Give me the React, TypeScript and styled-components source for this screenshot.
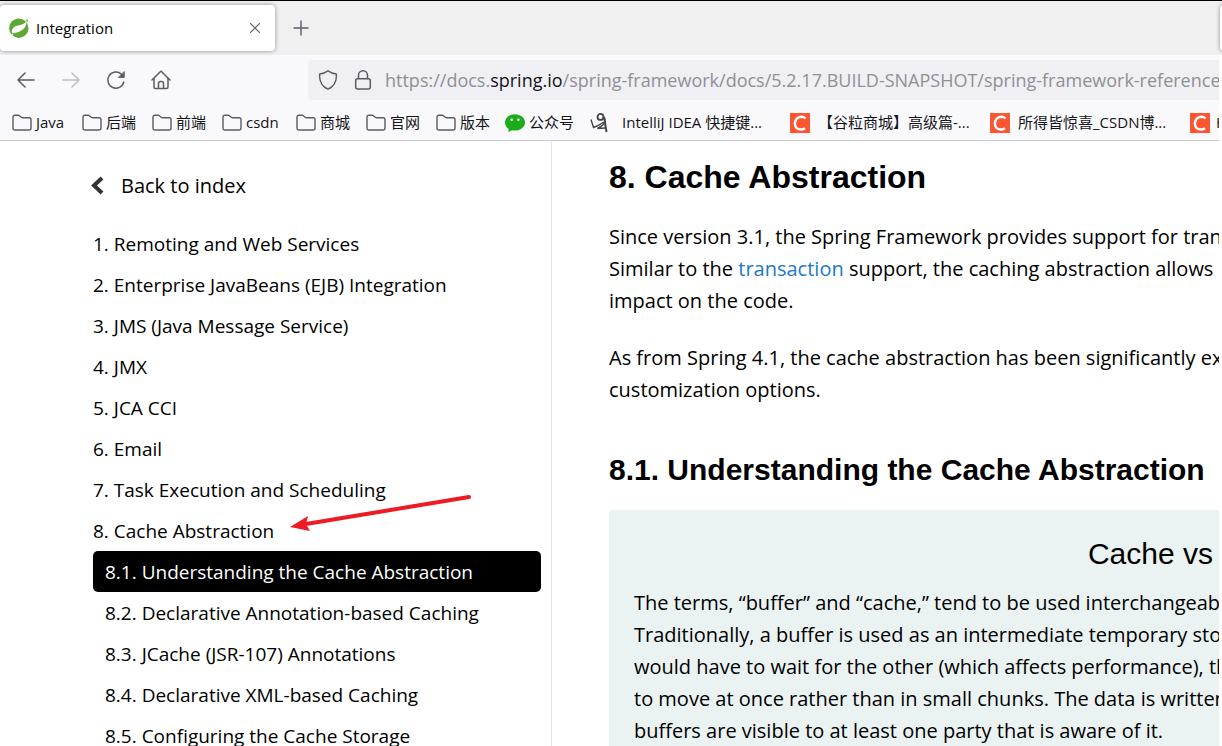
import React from 'react';
import styled, { createGlobalStyle, css } from 'styled-components';

const ui = '"Open Sans", "Noto Sans CJK SC", sans-serif';
const body = '"Open Sans", sans-serif';
const heading = '"Liberation Sans", Arial, sans-serif';

const GlobalStyle = createGlobalStyle`
  * { box-sizing: border-box; }
  body { margin: 0; background: #fff; color: #000; }
  a { color: inherit; text-decoration: none; }
  button { border: 0; padding: 0; background: none; color: inherit; }
  h1, h2, h3, p, ul, ol { margin: 0; padding: 0; font-weight: normal; }
  ul, ol { list-style: none; }
  svg { flex: none; }
`;

const Window = styled.div`
  height: 100vh;
  display: flex;
  flex-direction: column;
  overflow: hidden;
  padding-right: 3px;
  border-top: 1px solid #000;
`;

const TabStrip = styled.header`
  flex: none;
  display: flex;
  align-items: center;
  height: 54px;
  margin-right: -3px;
  background: #f0f0f0;
  overflow: hidden;
`;

const Tab = styled.div`
  display: flex;
  align-items: center;
  width: 275px;
  height: 46px;
  padding: 0 10px 0 9px;
  background: #fff;
  border-radius: 4px;
  box-shadow: 0 0 4px rgba(100, 95, 120, 0.7);
`;

const TabTitle = styled.span`
  flex: 1;
  margin-left: 7px;
  font: 15px/24px ${ui};
`;

const NextTab = styled(Tab)`
  flex: none;
  width: 40px;
  margin-left: auto;
  margin-right: -38px;
`;

const IconButton = styled.button<{ $size: number; $color?: string }>`
  display: flex;
  align-items: center;
  justify-content: center;
  flex: none;
  width: ${(p) => p.$size}px;
  height: ${(p) => p.$size}px;
  color: ${(p) => p.$color || '#5b5b66'};
`;

const NewTab = styled(IconButton)`
  margin-left: 10px;
`;

const NavBar = styled.nav`
  flex: none;
  display: flex;
  align-items: center;
  height: 50px;
  padding-left: 8px;
  background: #f9f9fb;
`;

const NavButtons = styled.div`
  display: flex;
  gap: 9px;
  width: 300px;
`;

const AddressBar = styled.div`
  flex: 1;
  min-width: 0;
  display: flex;
  align-items: center;
  height: 40px;
  padding-left: 10px;
  gap: 15px;
  border-radius: 4px 0 0 4px;
  background: #f0f0f4;
  overflow: hidden;
`;

const Url = styled.span`
  flex: none;
  margin-left: -3px;
  font: 18px/28px ${ui};
  color: #8f8f96;
  white-space: nowrap;

  b {
    font-weight: normal;
    color: #15141a;
  }
`;

const Bookmarks = styled.ul`
  flex: none;
  display: flex;
  align-items: center;
  height: 36px;
  padding-left: 12px;
  background: #f9f9fb;
  border-bottom: 1px solid #ccc;
  overflow: hidden;
`;

const Bookmark = styled.li<{ $width: number }>`
  flex: none;
  width: ${(p) => p.$width}px;

  a {
    display: flex;
    align-items: center;
    gap: 4px;
    font: 15px/22px ${ui};
    color: #15141a;
    white-space: nowrap;
  }
`;

const Label = styled.span<{ $indent?: number }>`
  padding-bottom: 2px;
  margin-left: ${(p) => p.$indent || 0}px;
`;

const CsdnLogo = styled.svg`
  background: #fc5531;
`;

const Page = styled.div`
  flex: 1;
  min-height: 0;
  display: flex;
`;

const Sidebar = styled.aside`
  position: relative;
  flex: none;
  width: 552px;
  padding: 30px 10px 0 93px;
  border-right: 1px solid #e1e8e8;
  overflow: hidden;
  font: 19px/28px ${body};
`;

const BackLink = styled.a`
  display: flex;
  align-items: center;
  gap: 17px;
  height: 29px;
  margin-bottom: 23px;
  margin-left: -2px;
  font-size: 20px;
`;

const tocRow = css`
  display: block;
  padding: 7px 0 6px;
  border-radius: 5px;
`;

const TocLink = styled.a<{ $nested?: boolean; $active?: boolean }>`
  ${tocRow}
  padding-left: ${(p) => (p.$nested ? 12 : 0)}px;
  background: ${(p) => (p.$active ? '#000' : 'transparent')};
  color: ${(p) => (p.$active ? '#fff' : '#000')};
`;

const Pointer = styled.svg`
  position: absolute;
  left: 290px;
  top: 352px;
`;

const Article = styled.main`
  flex: 1;
  min-width: 0;
  padding: 14px 0 0 57px;
  overflow: hidden;
  white-space: nowrap;
  font: 20px/32px ${body};
`;

const Title = styled.h1`
  font: bold 32px/44px ${heading};
  margin-bottom: 22px;
`;

const Paragraph = styled.p`
  margin-bottom: 25px;

  a {
    color: #1b79c9;
  }
`;

const Subtitle = styled.h2`
  font: bold 30px/40px ${heading};
  margin: 44px 0 20px;
`;

const Note = styled.section`
  padding: 24px 0 24px 25px;
  border-radius: 4px 0 0 4px;
  background: #ebf2f2;
`;

const NoteTitle = styled.h3`
  margin-bottom: 13px;
  padding-right: 6px;
  text-align: right;
  font: 30px/40px ${heading};
`;

const FolderIcon = () => (
  <svg width="20" height="18" viewBox="0 0 20 18" fill="none" stroke="#5b5b66" strokeWidth="1.4" aria-hidden="true">
    <path d="M1 3.2q0-2 2-2h3.2q.9 0 1.5.7l1.2 1.2q.6.6 1.500.6h6.600q2 0 2 2V14q0 2-2 2H3q-2 0-2-2z" />
  </svg>
);

const SpringIcon = () => (
  <svg width="20" height="20" viewBox="0 0 20 20" aria-hidden="true">
    <circle cx="9.800" cy="10.200" r="9.700" fill="#5fa833" />
    <path d="M17.500 3.300C14 8.200 8.500 6.600 5 9.200c-2.200 1.700-2.800 4-1.700 6.300 3.300-.3 6.700-.4 9.300-2.400 3.300-2.500 4.900-5.600 4.900-9.800z" fill="#fff" />
    <path d="M4 15.300c4.500-.5 8-1.800 10.800-5.300-2.300 4.600-5.800 6.300-10.300 6.500z" fill="#5fa833" />
    <path d="M18.300.3l.9 4.400-2-2.200z" fill="#5fa833" />
    <circle cx="3.600" cy="16.600" r=".8" fill="#fff" />
  </svg>
);

const WeChatIcon = () => (
  <svg width="20" height="20" viewBox="0 0 20 20" aria-hidden="true">
    <path d="M10 1.200c5.500 0 10 3.600 10 8.200s-4.500 8.200-10 8.200c-1 0-2-.1-3-.4L3.200 19l.6-3C1.500 14.400 0 12 0 9.400c0-4.600 4.500-8.200 10-8.200z" fill="#1aad19" />
    <circle cx="6.600" cy="6.800" r="1.300" fill="#fff" />
    <circle cx="13.400" cy="6.800" r="1.300" fill="#fff" />
  </svg>
);

const FigureIcon = () => (
  <svg width="20" height="20" viewBox="0 0 20 20" fill="none" stroke="#444" strokeWidth="1.400" aria-hidden="true">
    <circle cx="10.500" cy="3.900" r="3" strokeWidth="1.800" />
    <path d="M1 6.500l2.500 8 3.500-1.500 8-4.500" />
    <path d="M13 3.500c2.500 1.500 1.800 3 2 6.500l1.500 9" strokeWidth="2" />
    <path d="M14.500 10c-1.500 2.500-4 4-7 5.500l8-.5" />
  </svg>
);

const CsdnIcon = () => (
  <CsdnLogo width="20" height="20" viewBox="0 0 20 20" fill="none" stroke="#fff" strokeWidth="2.400" aria-hidden="true">
    <path d="M15.500 5.500C13.500 3.300 9 3 6.500 6c-2 2.500-2.200 6.500-.2 8.800 2 2.200 6.200 2.200 8.700.4" />
  </CsdnLogo>
);

const icons = { folder: FolderIcon, wechat: WeChatIcon, figure: FigureIcon, csdn: CsdnIcon };

const bookmarks: { icon: keyof typeof icons; label: string; width: number; indent?: number }[] = [
  { icon: 'folder', label: 'Java', width: 70 },
  { icon: 'folder', label: '后端', width: 70 },
  { icon: 'folder', label: '前端', width: 70 },
  { icon: 'folder', label: 'csdn', width: 74 },
  { icon: 'folder', label: '商城', width: 70 },
  { icon: 'folder', label: '官网', width: 70 },
  { icon: 'folder', label: '版本', width: 69 },
  { icon: 'wechat', label: '公众号', width: 85 },
  { icon: 'figure', label: 'IntelliJ IDEA 快捷键...', width: 200, indent: 8 },
  { icon: 'csdn', label: '【谷粒商城】高级篇-...', width: 200, indent: 4 },
  { icon: 'csdn', label: '所得皆惊喜_CSDN博...', width: 200, indent: 4 },
  { icon: 'csdn', label: 'Hexo', width: 200, indent: 2 },
];

const chapters: { label: string; nested?: boolean; active?: boolean }[] = [
  { label: '1. Remoting and Web Services' },
  { label: '2. Enterprise JavaBeans (EJB) Integration' },
  { label: '3. JMS (Java Message Service)' },
  { label: '4. JMX' },
  { label: '5. JCA CCI' },
  { label: '6. Email' },
  { label: '7. Task Execution and Scheduling' },
  { label: '8. Cache Abstraction' },
  { label: '8.1. Understanding the Cache Abstraction', nested: true, active: true },
  { label: '8.2. Declarative Annotation-based Caching', nested: true },
  { label: '8.3. JCache (JSR-107) Annotations', nested: true },
  { label: '8.4. Declarative XML-based Caching', nested: true },
  { label: '8.5. Configuring the Cache Storage', nested: true },
];

const line = { fill: 'none', stroke: 'currentColor', strokeLinecap: 'round', strokeLinejoin: 'round', 'aria-hidden': true } as const;

export default function App() {
  return (
    <Window>
      <GlobalStyle />
      <TabStrip>
        <Tab>
          <SpringIcon />
          <TabTitle>Integration</TabTitle>
          <IconButton $size={20} aria-label="Close tab">
            <svg {...line} width="10" height="10" viewBox="0 0 10 10" strokeWidth="1.200">
              <path d="M.6.6l8.800 8.800M9.400.6L.6 9.400" />
            </svg>
          </IconButton>
        </Tab>
        <NewTab $size={32} aria-label="New tab">
          <svg {...line} width="16" height="16" viewBox="0 0 16 16" strokeWidth="1.400">
            <path d="M8 1v14M1 8h14" />
          </svg>
        </NewTab>
        <NextTab />
      </TabStrip>
      <NavBar>
        <NavButtons>
          <IconButton $size={36} aria-label="Back">
            <svg {...line} width="18" height="16" viewBox="0 0 18 16" strokeWidth="1.500">
              <path d="M17 8H1M8 1L1 8l7 7" />
            </svg>
          </IconButton>
          <IconButton $size={36} $color="#bdbdc2" aria-label="Forward">
            <svg {...line} width="18" height="16" viewBox="0 0 18 16" strokeWidth="1.500">
              <path d="M1 8h16M10 1l7 7-7 7" />
            </svg>
          </IconButton>
          <IconButton $size={36} aria-label="Reload">
            <svg {...line} width="20" height="20" viewBox="0 0 20 20" strokeWidth="1.500">
              <path d="M17.800 12A8.100 8.100 0 1 1 15.500 4.200" />
              <path d="M18.300 1.800v5.700h-5.700z" fill="currentColor" strokeWidth=".8" />
            </svg>
          </IconButton>
          <IconButton $size={36} aria-label="Home">
            <svg {...line} width="20" height="20" viewBox="0 0 20 20" strokeWidth="1.500">
              <path d="M1 10l8.300-8.300q.7-.6 1.400 0L19 10M3 8.500V17q0 1.500 1.500 1.500h11Q17 18.500 17 17V8.500M7.500 18v-4.500q0-2 2-2h1q2 0 2 2V18" />
            </svg>
          </IconButton>
        </NavButtons>
        <AddressBar>
          <svg {...line} width="20" height="20" viewBox="0 0 20 20" stroke="#5b5b66" strokeWidth="1.500">
            <path d="M10 .9c2.500 1.800 5 2.700 8.300 3.100.6 6.200-2 12.500-8.300 15.100C3.700 16.500 1.100 10.200 1.700 4 5 3.600 7.500 2.700 10 .9z" />
          </svg>
          <svg {...line} width="20" height="20" viewBox="0 0 20 20" stroke="#5b5b66" strokeWidth="1.500">
            <rect x="2.700" y="8.700" width="14.600" height="10.300" rx="2" />
            <path d="M5.500 8.500V5.300a4.500 4.500 0 0 1 9 0v3.200" />
          </svg>
          <Url>
            https://docs.<b>spring.io</b>/spring-framework/docs/5.2.17.BUILD-SNAPSHOT/spring-framework-reference/
          </Url>
        </AddressBar>
      </NavBar>
      <Bookmarks>
        {bookmarks.map(({ icon, label, width, indent }) => {
          const Icon = icons[icon];
          return (
            <Bookmark key={label} $width={width}>
              <a href="#">
                <Icon />
                <Label $indent={indent}>{label}</Label>
              </a>
            </Bookmark>
          );
        })}
      </Bookmarks>
      <Page>
        <Sidebar>
          <BackLink href="#">
            <svg width="13" height="20" viewBox="0 0 13 20" fill="none" stroke="#333" strokeWidth="4" aria-hidden="true">
              <path d="M11 2L3 9.500l8 7.500" />
            </svg>
            Back to index
          </BackLink>
          <ol>
            {chapters.map(({ label, nested, active }) => (
              <li key={label}>
                <TocLink href="#" $nested={nested} $active={active}>
                  {label}
                </TocLink>
              </li>
            ))}
          </ol>
          <Pointer width="182" height="40" viewBox="0 0 182 40" aria-hidden="true">
            <path d="M179 4L16 31" stroke="#ed1c24" strokeWidth="4" strokeLinecap="round" />
            <path d="M0 34l18-11-2 8 4 7z" fill="#ed1c24" />
          </Pointer>
        </Sidebar>
        <Article>
          <Title>8. Cache Abstraction</Title>
          <Paragraph>
            Since version 3.1, the Spring Framework provides support for transparently
            <br />
            Similar to the <a href="#">transaction</a> support, the caching abstraction allows
            <br />
            impact on the code.
          </Paragraph>
          <Paragraph>
            As from Spring 4.1, the cache abstraction has been significantly extended
            <br />
            customization options.
          </Paragraph>
          <Subtitle>8.1. Understanding the Cache Abstraction</Subtitle>
          <Note>
            <NoteTitle>Cache vs</NoteTitle>
            <p>
              The terms, “buffer” and “cache,” tend to be used interchangeably.
              <br />
              Traditionally, a buffer is used as an intermediate temporary store
              <br />
              would have to wait for the other (which affects performance), the
              <br />
              to move at once rather than in small chunks. The data is written
              <br />
              buffers are visible to at least one party that is aware of it.
            </p>
          </Note>
        </Article>
      </Page>
    </Window>
  );
}
